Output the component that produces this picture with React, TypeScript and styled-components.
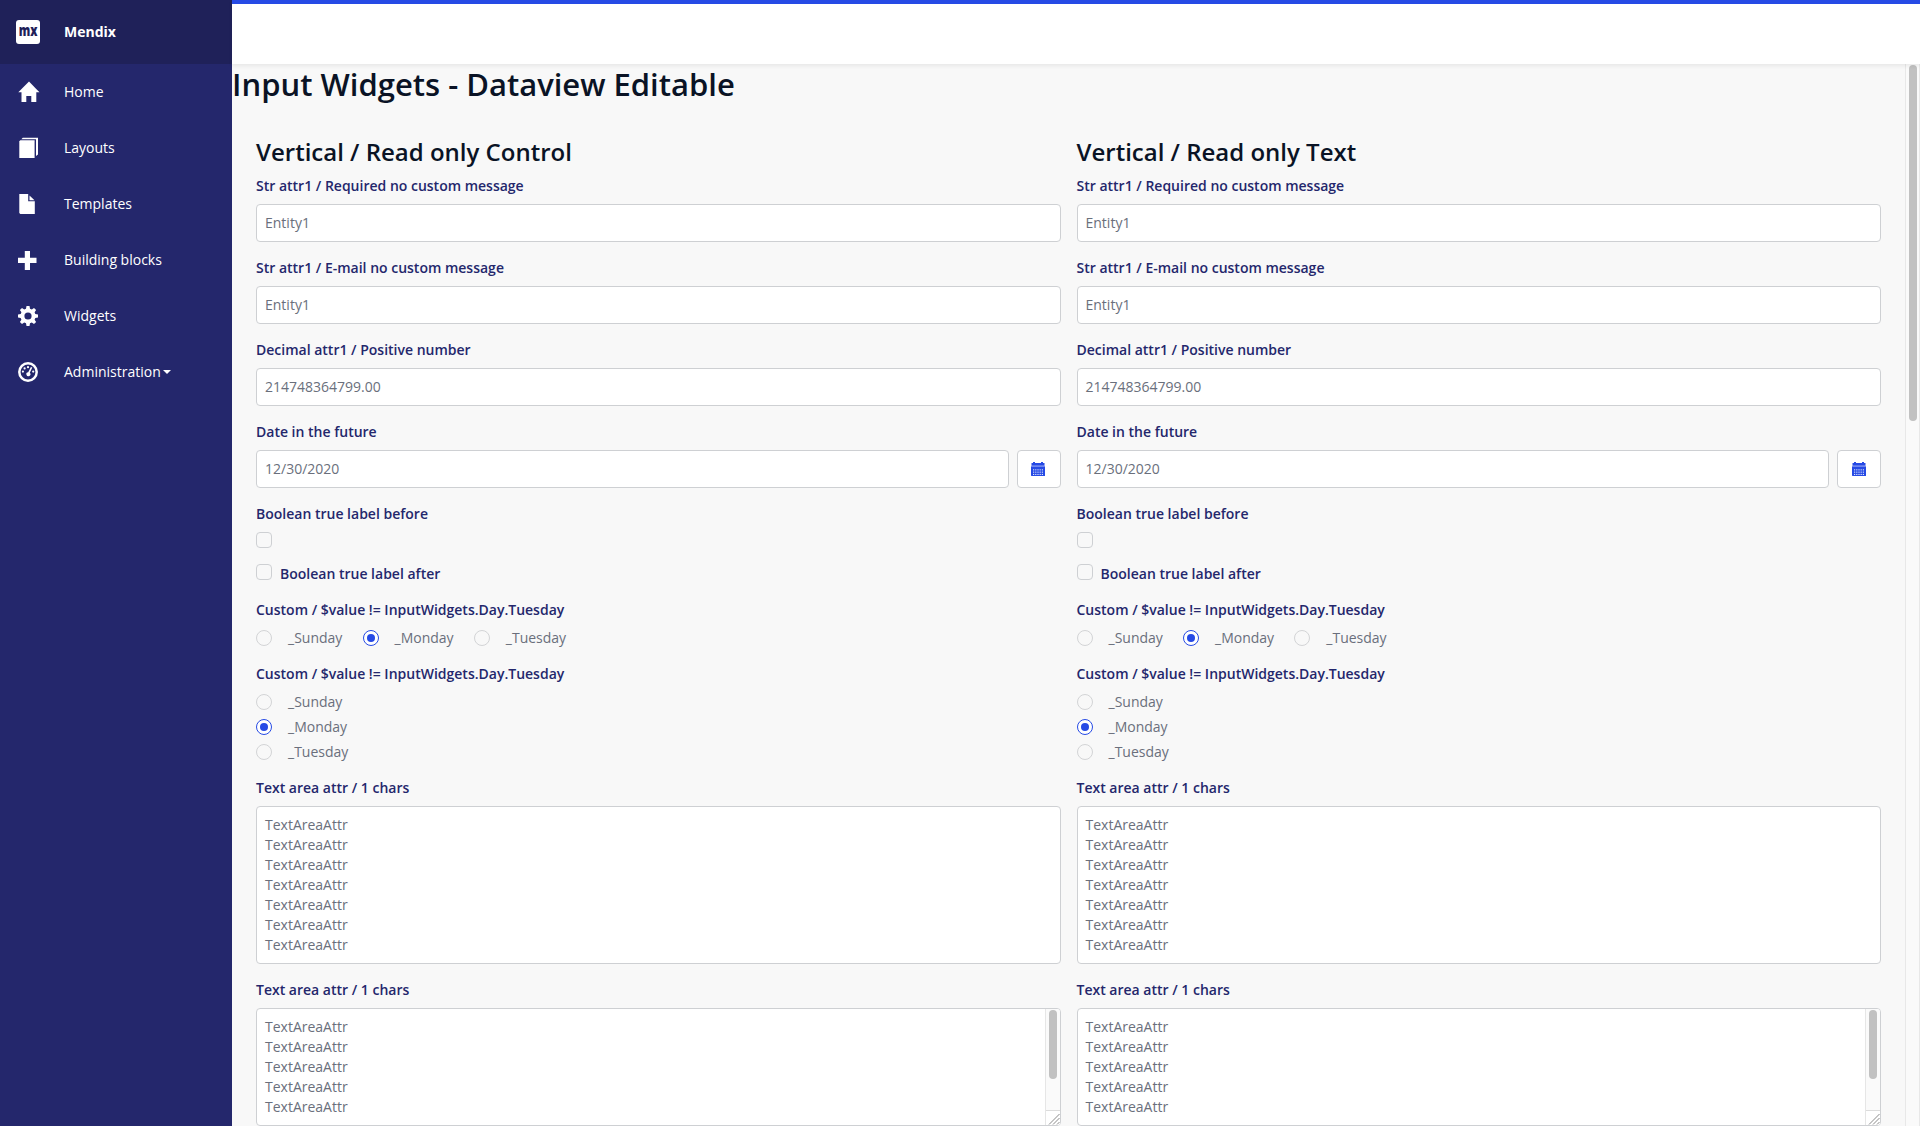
import React from "react";
import styled, { createGlobalStyle } from "styled-components";

const Global = createGlobalStyle`
  *, *::before, *::after { box-sizing: border-box; }
  body {
    margin: 0;
    overflow: hidden;
    background: #f8f8f8;
    color: #6a6f7c;
    font-family: "Open Sans", "Noto Sans", sans-serif;
    font-size: 14px;
    line-height: 20px;
  }
`;

const Page = styled.div`
  display: grid;
  grid-template-columns: 232px 1fr;
  height: 1126px;
  overflow: hidden;
`;

const Sidebar = styled.nav`
  display: flex;
  flex-direction: column;
  background: #24276c;
  color: #fff;
`;

const Brand = styled.div`
  display: flex;
  align-items: center;
  height: 64px;
  padding-left: 16px;
  background: #1f2159;
  font-weight: 700;
`;

const Logo = styled.svg`
  width: 24px;
  height: 24px;
  margin-right: 24px;
  overflow: visible;
  border-radius: 3px;
  background: #fff;
  fill: #1f2159;
  font-family: "Open Sans", sans-serif;
  font-size: 16.5px;
  font-weight: 800;
`;

const MenuItem = styled.a`
  display: flex;
  align-items: center;
  height: 56px;
  padding-left: 18px;
`;

const MenuIcon = styled.svg`
  width: 22px;
  height: 22px;
  margin-right: 24px;
  fill: #fff;
`;

const Caret = styled.span`
  margin-left: 2px;
  border: 4px solid transparent;
  border-top-color: #fff;
  border-bottom: 0;
`;

const Main = styled.div`
  display: flex;
  flex-direction: column;
  min-width: 0;
  height: 1126px;
`;

const TopBar = styled.header`
  z-index: 1;
  flex: none;
  height: 64px;
  border-top: 4px solid #264ae5;
  background: #fff;
  box-shadow: 0 2px 4px rgba(0, 0, 0, 0.07);
`;

const Scroller = styled.div`
  display: flex;
  flex: 1;
  min-height: 0;
`;

const Content = styled.main`
  flex: 1;
  min-width: 0;
`;

const Title = styled.h1`
  margin: 0;
  height: 68px;
  color: #0a1325;
  font-size: 31px;
  font-weight: 600;
  line-height: 40px;
`;

const Columns = styled.div`
  display: grid;
  grid-template-columns: 1fr 1fr;
  gap: 16px;
  padding: 0 24px;
`;

const Column = styled.section`
  display: flex;
  flex-direction: column;
  gap: 16px;
  min-width: 0;
`;

const Heading = styled.h2`
  margin: 0 0 -8px;
  color: #0a1325;
  font-size: 24px;
  font-weight: 600;
  line-height: 36px;
  height: 36px;
  padding-top: 2px;
`;

const Field = styled.div`
  display: flex;
  flex-direction: column;
  gap: 8px;
`;

const Label = styled.label`
  color: #24276c;
  font-weight: 600;
`;

const Input = styled.div`
  flex: 1;
  height: 38px;
  padding: 8px;
  border: 1px solid #ced0d3;
  border-radius: 4px;
  background: #fff;
`;

const DateRow = styled.div`
  display: flex;
  gap: 8px;
`;

const DateButton = styled.button`
  display: flex;
  align-items: center;
  justify-content: center;
  width: 44px;
  height: 38px;
  padding: 0 1px 0 0;
  border: 1px solid #ced0d3;
  border-radius: 4px;
  background: #fff;
`;

const CheckBox = styled.span`
  width: 16px;
  height: 16px;
  border: 1px solid #ced0d3;
  border-radius: 4px;
`;

const CheckRow = styled.div`
  display: flex;
  gap: 8px;
`;

const RadioList = styled.div<{ $inline?: boolean }>`
  display: flex;
  flex-direction: ${(p) => (p.$inline ? "row" : "column")};
  gap: ${(p) => (p.$inline ? "20.2px" : "5px")};
`;

const RadioItem = styled.label`
  display: flex;
  align-items: center;
  gap: 16px;
  height: 20px;
`;

const RadioDot = styled.span<{ $on: boolean }>`
  display: flex;
  align-items: center;
  justify-content: center;
  width: 16px;
  height: 16px;
  border: 1px solid ${(p) => (p.$on ? "#264ae5" : "#d3d4d6")};
  border-radius: 50%;
  background: ${(p) => (p.$on ? "#fff" : "transparent")};
  &::after {
    content: "";
    width: 8px;
    height: 8px;
    border-radius: 50%;
    background: ${(p) => (p.$on ? "#264ae5" : "transparent")};
  }
`;

const Area = styled.div`
  display: flex;
  border: 1px solid #ced0d3;
  border-radius: 4px;
  background: #fff;
  overflow: hidden;
`;

const AreaText = styled.div`
  flex: 1;
  padding: 8px;
  white-space: pre-line;
`;

const AreaBar = styled.div`
  display: flex;
  flex-direction: column;
  width: 15px;
  border-left: 1px solid #e6e6e6;
  background: #fafafa;
`;

const AreaTrack = styled.div`
  flex: 1;
  padding: 1px 3px;
`;

const Thumb = styled.div<{ $height: number }>`
  width: 8px;
  height: ${(p) => p.$height}px;
  border-radius: 4px;
  background: #c1c1c1;
`;

const Grip = styled.svg`
  display: block;
  width: 14px;
  height: 15px;
  border-top: 1px solid #dcdcdc;
  background: #fff;
`;

const PageBar = styled.div`
  width: 15px;
  padding: 1px 0 0 3px;
  border: 1px solid #e8e8e8;
  border-width: 0 1px;
  background: #fafafa;
`;

const icons: Record<string, React.ReactNode> = {
  Home: <path d="M11 .5 .3 11.2H3.500V21H8.300V15h5V21h5V11.200h3.200L18 7.700Z" />,
  Layouts: (
    <>
      <path d="M1.300 4.200 2.300 3.200H16.600V21H1.300Z" />
      <path d="M3.300 2.300 4.800 .8H20V17.500L18 19V2.300Z" />
    </>
  ),
  Templates: <path d="M1.300 1H10.200V8.300H16.800V21H2.300L1.300 20ZM11.500 2.500 16.500 7.200h-5Z" />,
  "Building blocks": <path d="M6.800 2h5.200v6.800h6.500v5.200h-6.500v7H6.800v-7H0V8.800h6.800Z" />,
  Widgets: (
    <path
      fillRule="evenodd"
      d="M8.500 1h3l.5 2.700 1.800.7 2.200-1.500 2.100 2.100-1.500 2.200.7 1.800 2.700.5v3l-2.700.5-.7 1.800 1.500 2.200-2.100 2.100-2.200-1.500-1.800.7-.5 2.700h-3L8 18.300l-1.800-.7L4 19.100 1.900 17l1.500-2.200-.7-1.800L0 12.500v-3L2.700 9l.7-1.800L1.900 5 4 2.900l2.200 1.500L8 3.700ZM10 7.400a3.600 3.600 0 1 0 0 7.200a3.600 3.600 0 1 0 0-7.200Z"
    />
  ),
  Administration: (
    <>
      <circle cx="10" cy="11" r="8.700" fill="none" stroke="#fff" strokeWidth="2.500" />
      <circle cx="4.900" cy="10.600" r="1.100" />
      <circle cx="6.600" cy="7.400" r="1.100" />
      <circle cx="10" cy="6.200" r="1.100" />
      <circle cx="15.200" cy="10.600" r="1.100" />
      <path d="M12.900 6l1.400.6-2.500 5.200a2 2 0 1 1-1.600-.6Z" />
    </>
  ),
};

const lines = (n: number) => Array(n).fill("TextAreaAttr").join("\n");

function Radios({ inline }: { inline?: boolean }) {
  return (
    <Field>
      <Label>Custom / $value != InputWidgets.Day.Tuesday</Label>
      <RadioList $inline={inline}>
        {["_Sunday", "_Monday", "_Tuesday"].map((d) => (
          <RadioItem key={d}>
            <RadioDot $on={d === "_Monday"} />
            {d}
          </RadioItem>
        ))}
      </RadioList>
    </Field>
  );
}

function CalendarIcon() {
  const cols = [2, 4.2, 6.4, 8.600, 10.800];
  const rows = [7.300, 9.600, 11.900];
  return (
    <svg width="14" height="14" viewBox="0 0 14 14">
      <path fill="#264ae5" d="M2 0h2v1h6V0h2v1h1.500V3.800H.5V1H2Z" />
      <path fill="#6f87ee" d="M0 3.800h14V5H0Z" />
      <path fill="#264ae5" d="M0 5h14v9H.5L0 13.500Z" />
      {rows.map((y) =>
        cols.map((x) => <rect key={`${x}-${y}`} x={x} y={y} width="1.200" height="1.100" fill="#dfe5fc" />)
      )}
    </svg>
  );
}

function FormColumn({ title }: { title: string }) {
  return (
    <Column>
      <Heading>{title}</Heading>
      <Field>
        <Label>Str attr1 / Required no custom message</Label>
        <Input>Entity1</Input>
      </Field>
      <Field>
        <Label>Str attr1 / E-mail no custom message</Label>
        <Input>Entity1</Input>
      </Field>
      <Field>
        <Label>Decimal attr1 / Positive number</Label>
        <Input>214748364799.00</Input>
      </Field>
      <Field>
        <Label>Date in the future</Label>
        <DateRow>
          <Input>12/30/2020</Input>
          <DateButton>
            <CalendarIcon />
          </DateButton>
        </DateRow>
      </Field>
      <Field>
        <Label>Boolean true label before</Label>
        <CheckBox />
      </Field>
      <CheckRow>
        <CheckBox />
        <Label>Boolean true label after</Label>
      </CheckRow>
      <Radios inline />
      <Radios />
      <Field>
        <Label>Text area attr / 1 chars</Label>
        <Area>
          <AreaText>{lines(7)}</AreaText>
        </Area>
      </Field>
      <Field>
        <Label>Text area attr / 1 chars</Label>
        <Area>
          <AreaText>{lines(5)}</AreaText>
          <AreaBar>
            <AreaTrack>
              <Thumb $height={69} />
            </AreaTrack>
            <Grip viewBox="0 0 14 14" fill="none" stroke="#8a8a8a">
              <path d="M3 13.500 13.500 3M7 13.500 13.500 7M11 13.500 13.500 11" />
            </Grip>
          </AreaBar>
        </Area>
      </Field>
    </Column>
  );
}

export default function App() {
  return (
    <Page>
      <Global />
      <Sidebar>
        <Brand>
          <Logo viewBox="0 0 24 24">
            <text x="2.700" y="16.300" textLength="18.800" lengthAdjust="spacingAndGlyphs">
              mx
            </text>
          </Logo>
          Mendix
        </Brand>
        {Object.keys(icons).map((name) => (
          <MenuItem key={name}>
            <MenuIcon viewBox="0 0 22 22">{icons[name]}</MenuIcon>
            {name}
            {name === "Administration" && <Caret />}
          </MenuItem>
        ))}
      </Sidebar>
      <Main>
        <TopBar />
        <Scroller>
          <Content>
            <Title>Input Widgets - Dataview Editable</Title>
            <Columns>
              <FormColumn title="Vertical / Read only Control" />
              <FormColumn title="Vertical / Read only Text" />
            </Columns>
          </Content>
          <PageBar>
            <Thumb $height={356} />
          </PageBar>
        </Scroller>
      </Main>
    </Page>
  );
}
